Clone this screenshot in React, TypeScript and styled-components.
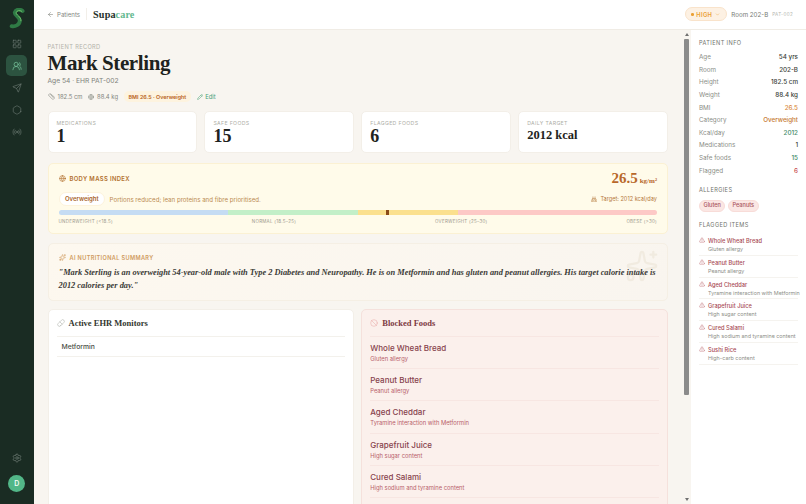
import styled, { createGlobalStyle } from "styled-components";
import {
  ArrowLeft,
  Ban,
  Cake,
  ChevronDown,
  Globe,
  Hexagon,
  LayoutGrid,
  Pencil,
  Pill,
  Radio,
  Ruler,
  Send,
  Settings,
  Sparkles,
  TriangleAlert,
  UsersRound,
} from "lucide-react";

const sans = `"Inter", "Noto Sans", sans-serif`;
const serif = `"Liberation Serif", "DejaVu Serif", serif`;

const GlobalStyle = createGlobalStyle`
  html, body { margin: 0; height: 100%; overflow: hidden; }
  body { font-family: ${sans}; background: #f8f5f0; color: #1f2421; }
  #root { height: 100%; }
  * { box-sizing: border-box; }
`;

const Shell = styled.div`
  display: flex;
  height: 504px;
  width: 806px;
`;

const Sidebar = styled.nav`
  width: 33.5px;
  flex: none;
  background: #1a2c23;
  display: flex;
  flex-direction: column;
  align-items: center;
  padding: 8px 0 12.5px;
`;

const LogoMark = styled.svg`
  width: 20px;
  height: 21px;
  margin-bottom: 4px;
`;

const NavButton = styled.div<{ $active?: boolean }>`
  width: 21px;
  height: 21px;
  margin-bottom: 1px;
  border-radius: 5px;
  display: flex;
  align-items: center;
  justify-content: center;
  background: ${(p) => (p.$active ? "#2c5340" : "transparent")};
  color: ${(p) => (p.$active ? "#7fcfa4" : "#74827a")};
`;

const NavSpacer = styled.div`
  flex: 1;
`;

const Avatar = styled.div`
  width: 17px;
  height: 17px;
  margin-top: 5px;
  border-radius: 50%;
  background: #52b788;
  color: #f2fbf6;
  font-size: 7px;
  font-weight: 600;
  display: flex;
  align-items: center;
  justify-content: center;
`;

const Body = styled.div`
  flex: 1;
  min-width: 0;
  display: flex;
  flex-direction: column;
`;

const TopBar = styled.header`
  height: 29.5px;
  flex: none;
  background: #fff;
  border-bottom: 1px solid #f0ece5;
  display: flex;
  align-items: center;
  padding: 0 13px 0 13.5px;
`;

const BackLink = styled.div`
  display: flex;
  align-items: center;
  gap: 3px;
  font-size: 6.1px;
  color: #83877f;
  padding-right: 6px;
  border-right: 1px solid #f2efe9;
  height: 12px;
`;

const Brand = styled.div`
  font-family: ${serif};
  font-weight: 700;
  font-size: 10.2px;
  margin-left: 6px;
  letter-spacing: 0.1px;
  color: #25302a;
`;

const BrandTint = styled.span`
  color: #63b98f;
`;

const TopRight = styled.div`
  margin-left: auto;
  display: flex;
  align-items: center;
`;

const RiskPill = styled.div`
  height: 14px;
  width: 42px;
  border-radius: 7px;
  background: #fdf1e3;
  border: 1px solid #f9e3cb;
  color: #eba033;
  font-size: 5.8px;
  font-weight: 600;
  letter-spacing: 0.3px;
  display: flex;
  align-items: center;
  gap: 2.5px;
  padding-left: 5px;
`;

const RiskDot = styled.span`
  width: 2.5px;
  height: 2.5px;
  border-radius: 50%;
  background: #eba033;
`;

const RoomText = styled.span`
  font-size: 6.2px;
  color: #777b74;
  margin-left: 4px;
`;

const PatientCode = styled.span`
  font-size: 4.6px;
  color: #b4b6b0;
  letter-spacing: 0.3px;
  margin-left: 4px;
`;

const Columns = styled.div`
  flex: 1;
  min-height: 0;
  display: flex;
`;

const Main = styled.main`
  flex: 1;
  min-width: 0;
  overflow: hidden;
  padding: 13.5px 14px 0;
`;

const ScrollTrack = styled.div`
  width: 9px;
  flex: none;
  display: flex;
  flex-direction: column;
  align-items: center;
  padding: 3px 0;
  background: #f8f5f0;
`;

const ScrollUp = styled.span`
  border-left: 2.5px solid transparent;
  border-right: 2.5px solid transparent;
  border-bottom: 3px solid #707070;
`;

const ScrollDown = styled.span`
  margin-top: auto;
  border-left: 2.5px solid transparent;
  border-right: 2.5px solid transparent;
  border-top: 3px solid #707070;
`;

const ScrollThumb = styled.div`
  width: 4.5px;
  height: 356px;
  margin-top: 3.5px;
  border-radius: 1px;
  background: #8b8b8b;
`;

const Eyebrow = styled.div`
  font-size: 5.7px;
  letter-spacing: 0.35px;
  color: #b3b2aa;
  line-height: 7px;
`;

const PatientName = styled.h1`
  margin: 0;
  font-family: ${serif};
  font-size: 21px;
  font-weight: 700;
  letter-spacing: -0.4px;
  line-height: 26px;
  color: #1e2320;
`;

const SubLine = styled.div`
  font-size: 6.7px;
  color: #80837c;
  line-height: 8px;
  margin-top: 1px;
`;

const MetaRow = styled.div`
  display: flex;
  align-items: center;
  height: 11px;
  margin-top: 6px;
  font-size: 5.9px;
  color: #83867f;
`;

const MetaItem = styled.span`
  display: inline-flex;
  align-items: center;
  gap: 3px;
  margin-right: 5.5px;
`;

const BmiTag = styled.span`
  background: #fdf3df;
  border-radius: 5px;
  color: #b96422;
  font-size: 5.4px;
  font-weight: 600;
  padding: 2.5px 5px;
  margin-right: 6px;
`;

const EditLink = styled.span`
  display: inline-flex;
  align-items: center;
  gap: 2px;
  color: #46a077;
  font-size: 5.8px;
`;

const StatGrid = styled.div`
  display: grid;
  grid-template-columns: repeat(4, 1fr);
  gap: 7px;
  margin-top: 9px;
`;

const StatCard = styled.div`
  height: 42px;
  background: #fff;
  border: 1px solid #f3efe8;
  border-radius: 5px;
  padding: 7.5px 8px 0;
`;

const StatLabel = styled.div`
  font-size: 5.2px;
  letter-spacing: 0.35px;
  color: #aeaea6;
  line-height: 6px;
`;

const StatValue = styled.div<{ $small?: boolean }>`
  font-family: ${serif};
  font-weight: 700;
  font-size: ${(p) => (p.$small ? "12.5px" : "18px")};
  line-height: ${(p) => (p.$small ? "17px" : "19px")};
  margin-top: 1px;
  color: #1e2320;
`;

const BmiCard = styled.section`
  margin-top: 9.5px;
  height: 71px;
  background: #fffbea;
  border: 1px solid #fbf1d3;
  border-radius: 5px;
  padding: 0 10px;
`;

const BmiHead = styled.div`
  display: flex;
  justify-content: space-between;
  align-items: center;
  height: 30px;
`;

const BmiTitle = styled.div`
  display: flex;
  align-items: center;
  gap: 4px;
  font-size: 5.9px;
  font-weight: 600;
  letter-spacing: 0.35px;
  color: #b1702e;
`;

const BmiValue = styled.div`
  font-family: ${serif};
  font-weight: 700;
  font-size: 15px;
  color: #b8682a;
`;

const BmiUnit = styled.span`
  font-size: 7px;
  margin-left: 2px;
`;

const BmiMiddle = styled.div`
  display: flex;
  align-items: center;
  height: 13px;
  margin-top: -1px;
`;

const BmiBadge = styled.span`
  background: #fff;
  border: 1px solid #fdf3dc;
  border-radius: 7px;
  color: #a8632a;
  font-size: 6px;
  font-weight: 600;
  padding: 0 5.5px;
  line-height: 11.5px;
`;

const BmiNote = styled.span`
  font-size: 6.15px;
  color: #bb8a52;
  margin-left: 4.5px;
`;

const BmiTarget = styled.span`
  margin-left: auto;
  display: inline-flex;
  align-items: center;
  gap: 3px;
  font-size: 5.6px;
  color: #b5793c;
`;

const ScaleBar = styled.div`
  position: relative;
  display: flex;
  height: 5px;
  border-radius: 3px;
  overflow: hidden;
  margin-top: 4.5px;
`;

const ScaleSegment = styled.div<{ $color: string; $grow: number }>`
  flex: ${(p) => p.$grow};
  background: ${(p) => p.$color};
`;

const ScaleMarker = styled.span`
  position: absolute;
  left: 54.7%;
  top: 0;
  width: 2.7px;
  height: 5px;
  background: #8a4a18;
`;

const ScaleLabels = styled.div`
  display: flex;
  justify-content: space-between;
  margin-top: 3.5px;
  font-size: 4.5px;
  letter-spacing: 0.25px;
  color: #9d9a8d;
`;

const SummaryCard = styled.section`
  position: relative;
  margin-top: 9px;
  height: 58px;
  background: linear-gradient(135deg, #fdf8ef 0%, #f9f5ef 100%);
  border: 1px solid #f5efe4;
  border-radius: 5px;
  padding: 10px 10px 0;
  overflow: hidden;
`;

const SummaryTitle = styled.div`
  display: flex;
  align-items: center;
  gap: 4px;
  font-size: 5.6px;
  font-weight: 600;
  letter-spacing: 0.35px;
  color: #d09b5e;
  line-height: 8px;
`;

const SummaryText = styled.p`
  position: relative;
  margin: 4.5px 0 0;
  font-family: ${serif};
  font-style: italic;
  font-weight: 700;
  font-size: 8.4px;
  line-height: 13px;
  color: #3a3a36;
`;

const Watermark = styled.div`
  position: absolute;
  right: 8px;
  top: 5px;
  color: #f1ebe0;
`;

const PanelGrid = styled.div`
  display: grid;
  grid-template-columns: 1fr 1fr;
  gap: 7px;
  margin-top: 8.5px;
`;

const Panel = styled.section<{ $danger?: boolean }>`
  background: ${(p) => (p.$danger ? "#fbf0ec" : "#fff")};
  border: 1px solid ${(p) => (p.$danger ? "#f5e1dc" : "#f3efe8")};
  border-radius: 5px;
  padding: 0 8px 8px;
`;

const PanelHead = styled.div<{ $danger?: boolean }>`
  height: 27px;
  display: flex;
  align-items: center;
  gap: 4px;
  font-family: ${serif};
  font-weight: 700;
  font-size: 8.5px;
  border-bottom: 1px solid ${(p) => (p.$danger ? "#f7e6e2" : "#f3f1ec")};
  color: ${(p) => (p.$danger ? "#7d3a42" : "#33372f")};
`;

const MonitorRow = styled.div`
  height: 20px;
  padding-left: 5px;
  display: flex;
  align-items: center;
  font-size: 6.8px;
  font-weight: 500;
  color: #4b4e47;
  border-bottom: 1px solid #f3f1ec;
`;

const BlockedRow = styled.div`
  height: 32.2px;
  padding-top: 7px;
  border-bottom: 1px solid #f7e6e2;

  &:last-child {
    border-bottom: none;
  }
`;

const BlockedName = styled.div`
  font-size: 8px;
  font-weight: 500;
  color: #87434d;
  line-height: 9px;
`;

const BlockedReason = styled.div`
  font-size: 5.8px;
  color: #b8606a;
  line-height: 8px;
  margin-top: 2px;
`;

const InfoPanel = styled.aside`
  width: 115px;
  flex: none;
  background: #fff;
  padding: 9px 8px 0;
`;

const InfoHeading = styled.div<{ $gap?: number }>`
  font-size: 5.6px;
  letter-spacing: 0.4px;
  color: #6f726b;
  line-height: 8px;
  margin-bottom: ${(p) => p.$gap ?? 4.5}px;
`;

const InfoRow = styled.div`
  display: flex;
  justify-content: space-between;
  align-items: center;
  height: 12.6px;
  font-size: 6.3px;
  color: #8a8d86;
`;

const InfoValue = styled.span<{ $color?: string }>`
  color: ${(p) => p.$color ?? "#3b3f39"};
  font-weight: 500;
`;

const InfoSection = styled.div`
  margin-top: 9px;
`;

const FlagSection = styled.div`
  margin-top: 9.5px;
`;

const ChipRow = styled.div`
  display: flex;
  gap: 2.5px;
`;

const Chip = styled.span`
  background: #fbe7e4;
  border: 1px solid #f8dcd8;
  border-radius: 6px;
  color: #a9535c;
  font-size: 5.6px;
  font-weight: 500;
  line-height: 9.5px;
  padding: 0 3.5px;
`;

const FlagRow = styled.div`
  display: grid;
  grid-template-columns: 9px 1fr;
  height: 21.8px;
  padding-top: 3px;
  border-bottom: 1px solid #f5f3ef;
  color: #b85c64;
`;

const FlagName = styled.div`
  font-size: 5.7px;
  font-weight: 500;
  color: #a84c55;
  line-height: 8px;
`;

const FlagReason = styled.div`
  font-size: 5.4px;
  color: #8e8f89;
  line-height: 8px;
  white-space: nowrap;
`;

const flagged = [
  { name: "Whole Wheat Bread", reason: "Gluten allergy" },
  { name: "Peanut Butter", reason: "Peanut allergy" },
  { name: "Aged Cheddar", reason: "Tyramine interaction with Metformin" },
  { name: "Grapefruit Juice", reason: "High sugar content" },
  { name: "Cured Salami", reason: "High sodium and tyramine content" },
  { name: "Sushi Rice", reason: "High-carb content" },
];

const info: { label: string; value: string; color?: string }[] = [
  { label: "Age", value: "54 yrs" },
  { label: "Room", value: "202-B" },
  { label: "Height", value: "182.5 cm" },
  { label: "Weight", value: "88.4 kg" },
  { label: "BMI", value: "26.5", color: "#d9893c" },
  { label: "Category", value: "Overweight", color: "#c67a34" },
  { label: "Kcal/day", value: "2012", color: "#3f8a68" },
  { label: "Medications", value: "1" },
  { label: "Safe foods", value: "15", color: "#3f8a68" },
  { label: "Flagged", value: "6", color: "#c8474a" },
];

export default function App() {
  return (
    <>
      <GlobalStyle />
      <Shell>
        <Sidebar>
          <LogoMark viewBox="0 0 20 21" fill="none">
            <path
              d="M15.6 3C13 .8 8.6 1.2 7.8 4.4c-.8 3.2 5.4 4.4 5 8.6-.3 3.6-4.4 6-8.2 5.2"
              stroke="#2f7a45"
              strokeWidth="3.8"
              strokeLinecap="round"
            />
            <path
              d="M14.6 3.2C12.6 2 9.8 2.4 9.2 4.6c-.6 2.4 5 3.6 4.8 8.2"
              stroke="#6fbf6a"
              strokeWidth="1"
              strokeLinecap="round"
            />
          </LogoMark>
          <NavButton><LayoutGrid size={10} strokeWidth={1.4} /></NavButton>
          <NavButton $active><UsersRound size={10} strokeWidth={1.6} /></NavButton>
          <NavButton><Send size={10} strokeWidth={1.4} /></NavButton>
          <NavButton><Hexagon size={10} strokeWidth={1.4} /></NavButton>
          <NavButton><Radio size={10} strokeWidth={1.4} /></NavButton>
          <NavSpacer />
          <NavButton><Settings size={10} strokeWidth={1.6} /></NavButton>
          <Avatar>D</Avatar>
        </Sidebar>
        <Body>
          <TopBar>
            <BackLink><ArrowLeft size={7} />Patients</BackLink>
            <Brand>Supa<BrandTint>care</BrandTint></Brand>
            <TopRight>
              <RiskPill><RiskDot />HIGH<ChevronDown size={5} /></RiskPill>
              <RoomText>Room 202-B</RoomText>
              <PatientCode>PAT-002</PatientCode>
            </TopRight>
          </TopBar>
          <Columns>
            <Main>
              <Eyebrow>PATIENT RECORD</Eyebrow>
              <PatientName>Mark Sterling</PatientName>
              <SubLine>Age 54 · EHR PAT-002</SubLine>
              <MetaRow>
                <MetaItem><Ruler size={7} />182.5 cm</MetaItem>
                <MetaItem><Globe size={6} />88.4 kg</MetaItem>
                <BmiTag>BMI 26.5 · Overweight</BmiTag>
                <EditLink><Pencil size={6} />Edit</EditLink>
              </MetaRow>
              <StatGrid>
                <StatCard><StatLabel>MEDICATIONS</StatLabel><StatValue>1</StatValue></StatCard>
                <StatCard><StatLabel>SAFE FOODS</StatLabel><StatValue>15</StatValue></StatCard>
                <StatCard><StatLabel>FLAGGED FOODS</StatLabel><StatValue>6</StatValue></StatCard>
                <StatCard><StatLabel>DAILY TARGET</StatLabel><StatValue $small>2012 kcal</StatValue></StatCard>
              </StatGrid>
              <BmiCard>
                <BmiHead>
                  <BmiTitle><Globe size={7} />BODY MASS INDEX</BmiTitle>
                  <BmiValue>26.5<BmiUnit>kg/m²</BmiUnit></BmiValue>
                </BmiHead>
                <BmiMiddle>
                  <BmiBadge>Overweight</BmiBadge>
                  <BmiNote>Portions reduced; lean proteins and fibre prioritised.</BmiNote>
                  <BmiTarget><Cake size={6} />Target: 2012 kcal/day</BmiTarget>
                </BmiMiddle>
                <ScaleBar>
                  <ScaleSegment $color="#c5dcf3" $grow={28.3} />
                  <ScaleSegment $color="#c3efc8" $grow={21.7} />
                  <ScaleSegment $color="#fbe08e" $grow={16.7} />
                  <ScaleSegment $color="#fdc9c6" $grow={33.3} />
                  <ScaleMarker />
                </ScaleBar>
                <ScaleLabels>
                  <span>UNDERWEIGHT (&lt;18.5)</span>
                  <span>NORMAL (18.5–25)</span>
                  <span>OVERWEIGHT (25–30)</span>
                  <span>OBESE (&gt;30)</span>
                </ScaleLabels>
              </BmiCard>
              <SummaryCard>
                <Watermark><Sparkles size={34} strokeWidth={1.6} /></Watermark>
                <SummaryTitle><Sparkles size={7} />AI NUTRITIONAL SUMMARY</SummaryTitle>
                <SummaryText>
                  "Mark Sterling is an overweight 54-year-old male with Type 2 Diabetes and Neuropathy. He is on Metformin and has gluten and peanut allergies. His target calorie intake is 2012 calories per day."
                </SummaryText>
              </SummaryCard>
              <PanelGrid>
                <Panel>
                  <PanelHead><Pill size={8} color="#a5a8a1" strokeWidth={1.5} />Active EHR Monitors</PanelHead>
                  <MonitorRow>Metformin</MonitorRow>
                </Panel>
                <Panel $danger>
                  <PanelHead $danger><Ban size={8} color="#e9a7a5" strokeWidth={1.5} />Blocked Foods</PanelHead>
                  {flagged.map((item) => (
                    <BlockedRow key={item.name}>
                      <BlockedName>{item.name}</BlockedName>
                      <BlockedReason>{item.reason}</BlockedReason>
                    </BlockedRow>
                  ))}
                </Panel>
              </PanelGrid>
            </Main>
            <ScrollTrack>
              <ScrollUp />
              <ScrollThumb />
              <ScrollDown />
            </ScrollTrack>
            <InfoPanel>
              <InfoHeading>PATIENT INFO</InfoHeading>
              {info.map((row) => (
                <InfoRow key={row.label}>
                  <span>{row.label}</span>
                  <InfoValue $color={row.color}>{row.value}</InfoValue>
                </InfoRow>
              ))}
              <InfoSection>
                <InfoHeading $gap={6.5}>ALLERGIES</InfoHeading>
                <ChipRow><Chip>Gluten</Chip><Chip>Peanuts</Chip></ChipRow>
              </InfoSection>
              <FlagSection>
                <InfoHeading>FLAGGED ITEMS</InfoHeading>
                {flagged.map((item) => (
                  <FlagRow key={item.name}>
                    <TriangleAlert size={6} strokeWidth={1.7} />
                    <div>
                      <FlagName>{item.name}</FlagName>
                      <FlagReason>{item.reason}</FlagReason>
                    </div>
                  </FlagRow>
                ))}
              </FlagSection>
            </InfoPanel>
          </Columns>
        </Body>
      </Shell>
    </>
  );
}
